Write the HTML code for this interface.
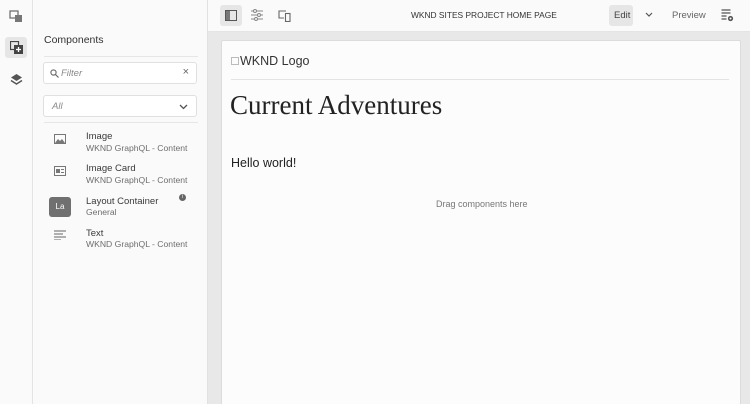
<!DOCTYPE html>
<html style="overflow:hidden;width:750px;height:404px"><head><meta charset="utf-8"><style>
*{box-sizing:border-box;margin:0;padding:0}
body{width:750px;height:404px;overflow:hidden;background:#fff;font-family:"Liberation Sans",sans-serif;position:relative;color:#4b4b4b}
.rail{position:absolute;left:0;top:0;width:33px;height:404px;background:#fafafa;border-right:1px solid #e4e4e4}
.panel{position:absolute;left:33px;top:0;width:175px;height:404px;background:#fafafa;border-right:1px solid #e1e1e1}
.top{position:absolute;left:208px;top:0;width:542px;height:32px;background:#fafafa;border-bottom:1px solid #e4e4e4}
.stage{position:absolute;left:208px;top:32px;width:542px;height:372px;background:#e8e8e8}
.page{position:absolute;left:221px;top:40px;width:520px;height:364px;background:#fcfcfc;border:1px solid #dcdcdc;border-bottom:none;border-radius:2px 2px 0 0}
.t{position:absolute;white-space:nowrap}
.sel{position:absolute;background:#e6e6e6;border-radius:3px}
.box{position:absolute;left:43px;width:154px;height:22px;border:1px solid #e0e0e0;background:#fff;border-radius:3px}
.item1{font-size:9.5px;color:#3a3a3a}
.item2{font-size:8.6px;color:#6e6e6e}
</style></head><body>
<div class="rail">
 <svg class="t" style="left:9px;top:9px" width="14" height="14" viewBox="0 0 14 14"><rect x="1" y="2" width="8" height="7" fill="none" stroke="#666" stroke-width="1.2"/><rect x="6" y="6" width="7" height="7" fill="#777"/></svg>
 <div class="sel" style="left:5px;top:37px;width:22px;height:21px"></div>
 <svg class="t" style="left:10px;top:41px" width="13" height="13" viewBox="0 0 13 13"><rect x="0.5" y="0.5" width="8" height="8" fill="none" stroke="#444" stroke-width="1.2"/><rect x="4" y="4" width="9" height="9" fill="#444"/><path d="M8.5 6v5M6 8.5h5" stroke="#fff" stroke-width="1.3"/></svg>
 <svg class="t" style="left:10px;top:73px" width="13" height="13" viewBox="0 0 13 13"><path d="M6.5 1L12 4.5 6.5 8 1 4.5z" fill="#555"/><path d="M1 7.5L6.5 11 12 7.5" fill="none" stroke="#555" stroke-width="1.5"/></svg>
</div>
<div class="panel">
 <div class="t" style="left:11px;top:34px;font-size:10.5px;color:#333">Components</div>
 <div style="position:absolute;left:11px;top:56px;width:154px;height:1px;background:#e6e6e6"></div>
</div>
<div class="box" style="top:62px"><svg class="t" style="left:6px;top:6px" width="9" height="9" viewBox="0 0 9 9"><circle cx="3.5" cy="3.5" r="2.6" fill="none" stroke="#666" stroke-width="1.1"/><path d="M5.5 5.5L8.5 8.5" stroke="#666" stroke-width="1.2"/></svg><span class="t" style="left:17px;top:5px;font-size:9.5px;font-style:italic;color:#8a8a8a">Filter</span><span class="t" style="right:7px;top:3px;font-size:11px;color:#666">×</span></div>
<div class="box" style="top:95px"><span class="t" style="left:8px;top:5px;font-size:9.5px;font-style:italic;color:#8a8a8a">All</span><svg class="t" style="right:8px;top:8px" width="9" height="6" viewBox="0 0 9 6"><path d="M1 1l3.5 3.5L8 1" fill="none" stroke="#555" stroke-width="1.3"/></svg></div>
<div style="position:absolute;left:44px;top:122px;width:154px;height:1px;background:#e6e6e6"></div>
<svg class="t" style="left:54px;top:134px" width="12" height="10" viewBox="0 0 12 10"><rect x="0.5" y="0.5" width="11" height="9" fill="none" stroke="#777"/><path d="M1 9l3-4 2 2 2-2 3 4z" fill="#777"/></svg>
<div class="t item1" style="left:86px;top:131px">Image</div><div class="t item2" style="left:86px;top:143px">WKND GraphQL - Content</div>
<svg class="t" style="left:54px;top:166px" width="12" height="10" viewBox="0 0 12 10"><rect x="0.5" y="0.5" width="11" height="9" fill="none" stroke="#777"/><rect x="2" y="3" width="4" height="4" fill="#777"/><path d="M7 3.5h3M7 6.5h3" stroke="#777"/></svg>
<div class="t item1" style="left:86px;top:163px">Image Card</div><div class="t item2" style="left:86px;top:175px">WKND GraphQL - Content</div>
<div class="t" style="left:49px;top:197px;width:22px;height:20px;background:#707070;border-radius:3px;color:#fff;font-size:8px;text-align:center;line-height:20px">La</div>
<div class="t item1" style="left:86px;top:196px">Layout Container</div><div class="t item2" style="left:86px;top:207px">General</div>
<div class="t" style="left:179px;top:194px;width:7px;height:7px;border-radius:50%;background:#666;color:#fff;font-size:5px;text-align:center;line-height:7px">i</div>
<svg class="t" style="left:54px;top:230px" width="12" height="10" viewBox="0 0 12 10"><path d="M0 1h12M0 4h9M0 7h12M0 10h7" stroke="#666" stroke-width="1.1"/></svg>
<div class="t item1" style="left:86px;top:228px">Text</div><div class="t item2" style="left:86px;top:239px">WKND GraphQL - Content</div>
<div class="top">
 <div class="sel" style="left:12px;top:5px;width:22px;height:21px"></div>
 <svg class="t" style="left:17px;top:10px" width="12" height="11" viewBox="0 0 12 11"><rect x="0.5" y="0.5" width="11" height="10" fill="none" stroke="#555"/><rect x="1" y="1" width="4" height="9" fill="#777"/></svg>
 <svg class="t" style="left:43px;top:9px" width="12" height="12" viewBox="0 0 12 12"><path d="M0 2h12M0 6h12M0 10h12" stroke="#888" stroke-width="0.9"/><circle cx="4" cy="2" r="1.5" fill="#fafafa" stroke="#888"/><circle cx="8" cy="6" r="1.5" fill="#fafafa" stroke="#888"/><circle cx="5" cy="10" r="1.5" fill="#fafafa" stroke="#888"/></svg>
 <svg class="t" style="left:70px;top:9px" width="13" height="13" viewBox="0 0 13 13"><path d="M8 2H1v7h5" fill="none" stroke="#666" stroke-width="1.1"/><rect x="7.5" y="4.5" width="4.5" height="8" fill="none" stroke="#666" stroke-width="1.1"/></svg>
 <div class="t" style="left:203px;top:10px;font-size:8.4px;color:#333">WKND SITES PROJECT HOME PAGE</div>
 <div class="sel" style="left:401px;top:5px;width:24px;height:21px"></div>
 <div class="t" style="left:406px;top:10px;font-size:9.5px;color:#444">Edit</div>
 <svg class="t" style="left:437px;top:12px" width="8" height="6" viewBox="0 0 8 6"><path d="M1 1l3 3 3-3" fill="none" stroke="#555" stroke-width="1.2"/></svg>
 <div class="t" style="left:464px;top:10px;font-size:9.5px;color:#666">Preview</div>
 <svg class="t" style="left:513px;top:9px" width="13" height="13" viewBox="0 0 13 13"><path d="M0.5 1h9M0.5 4h9M0.5 7h5M0.5 10h5" stroke="#555" stroke-width="1.2"/><circle cx="9.5" cy="9.5" r="2.6" fill="#555"/><circle cx="9.5" cy="9.5" r="1" fill="#fafafa"/></svg>
</div>
<div class="stage"></div>
<div class="page">
 <div class="t" style="left:9px;top:13px;font-size:12.5px;color:#333"><span style="display:inline-block;width:8px;height:8px;border:1px solid #bbb;margin-right:1px;vertical-align:0"></span>WKND Logo</div>
 <div style="position:absolute;left:9px;top:38px;width:498px;height:1px;background:#e4e4e4"></div>
 <div class="t" style="left:8px;top:49px;font-family:'Liberation Serif',serif;font-size:27px;color:#222">Current Adventures</div>
 <div class="t" style="left:9px;top:115px;font-size:12.5px;color:#222">Hello world!</div>
 <div class="t" style="left:214px;top:158px;font-size:9px;color:#777">Drag components here</div>
</div>
</body></html>
